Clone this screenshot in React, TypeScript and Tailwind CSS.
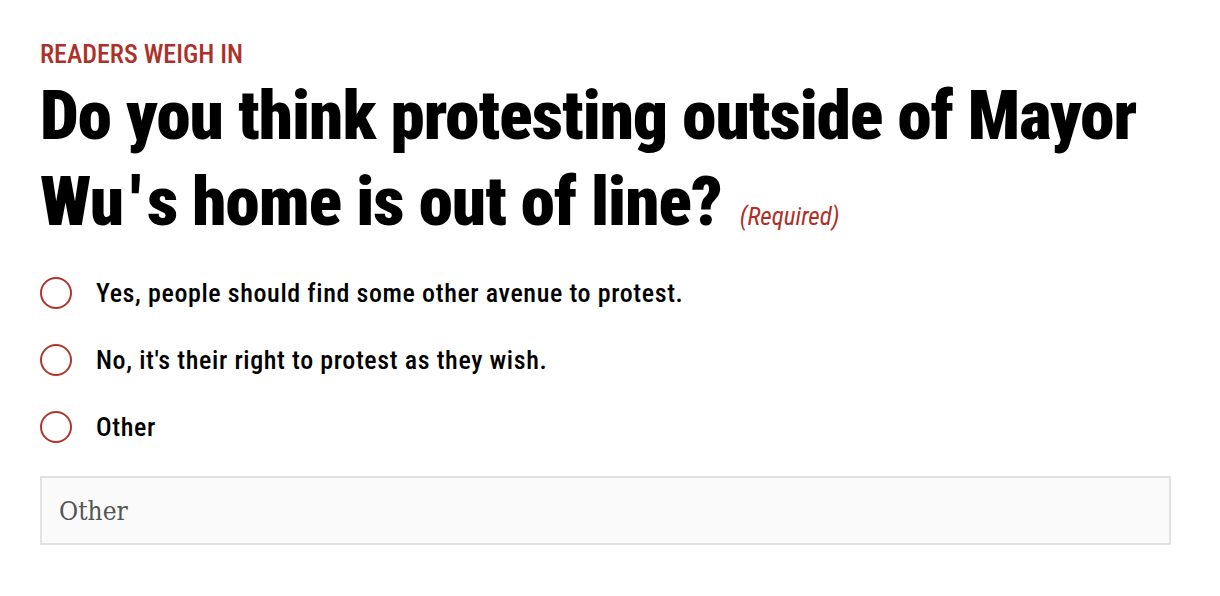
const options = [
  'Yes, people should find some other avenue to protest.',
  "No, it's their right to protest as they wish.",
  'Other',
];

export default function App() {
  return (
    <div className="min-h-screen bg-white pl-[40px] pr-[49px] pt-[39px] font-['Roboto',sans-serif] font-stretch-condensed text-black">
      <div className="text-[26px] leading-[30px] font-medium text-[#ad3129]">READERS WEIGH IN</div>
      <h1 className="mt-[4px] text-[69px] leading-[86px] font-black tracking-[-0.9px]">
        Do you think protesting outside of Mayor Wu<span className="px-[7px]">'</span>s home is out of line?
        <span className="ml-[18px] text-[25px] leading-none font-normal italic tracking-normal text-[#ad3129]">(Required)</span>
      </h1>
      <fieldset className="mt-[32px] flex flex-col gap-[35px]">
        {options.map((o, i) => (
          <label key={o} className="flex items-center gap-[24px] h-[32px] cursor-pointer">
            <input
              type="radio"
              name="weigh-in"
              value={i}
              className="appearance-none m-0 w-[32px] h-[32px] shrink-0 rounded-full border-2 border-[#b0352d] bg-white"
            />
            <span className="text-[26px] leading-[32px] font-medium tracking-[0.6px]">{o}</span>
          </label>
        ))}
      </fieldset>
      <input
        type="text"
        placeholder="Other"
        className="mt-[33px] block w-full h-[69px] border-2 border-[#e2e2e2] bg-[#fafafa] px-[17px] font-['DejaVu_Serif',serif] text-[26px] text-[#555] placeholder:text-[#555] outline-none"
      />
    </div>
  );
}
